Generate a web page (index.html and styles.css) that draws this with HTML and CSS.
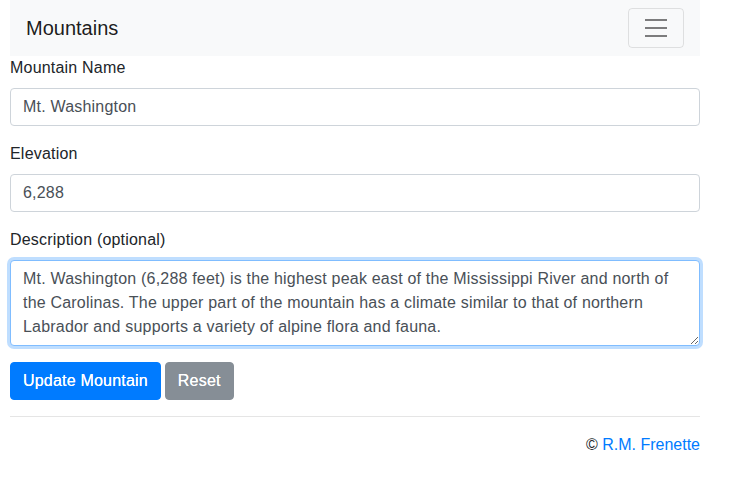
FILE: index.html
```html
<!DOCTYPE html>
<html lang="en">
<head>
<meta charset="utf-8">
<title>Mountains</title>
<link rel="stylesheet" href="styles.css">
</head>
<body>
<div class="page">
  <nav class="navbar">
    <span class="brand">Mountains</span>
    <button class="toggler" type="button" aria-label="Toggle navigation">
      <svg width="30" height="30" viewBox="0 0 30 30" aria-hidden="true"><path d="M4 7h22M4 15h22M4 23h22" stroke="rgba(0,0,0,0.5)" stroke-width="2" stroke-linecap="butt" fill="none"/></svg>
    </button>
  </nav>
  <form class="form">
    <div class="group">
      <label class="label" for="name">Mountain Name</label>
      <input class="control" id="name" type="text" value="Mt. Washington">
    </div>
    <div class="group">
      <label class="label" for="elev">Elevation</label>
      <input class="control" id="elev" type="text" value="6,288">
    </div>
    <div class="group">
      <label class="label" for="desc">Description (optional)</label>
      <textarea class="control area focused" id="desc" rows="3">Mt. Washington (6,288 feet) is the highest peak east of the Mississippi River and north of the Carolinas. The upper part of the mountain has a climate similar to that of northern Labrador and supports a variety of alpine flora and fauna.</textarea>
    </div>
    <div class="actions">
      <button class="btn primary" type="button">Update Mountain</button>
      <button class="btn secondary" type="button">Reset</button>
    </div>
  </form>
  <hr class="rule">
  <footer class="footer">© <a class="link" href="#">R.M. Frenette</a></footer>
</div>
</body>
</html>
```
FILE: styles.css
```css
* { box-sizing: border-box; }
html, body { margin: 0; padding: 0; }
body {
  font-family: "Liberation Sans", Arial, Helvetica, sans-serif;
  font-size: 16px;
  line-height: 1.5;
  letter-spacing: 0.2px;
  color: #212529;
  background: #fff;
}
.page {
  width: 690px;
  margin-left: 10px;
}
.navbar {
  display: flex;
  align-items: center;
  justify-content: space-between;
  padding: 8px 16px;
  background: #f8f9fa;
  height: 56px;
}
.brand {
  font-size: 20px;
  line-height: 30px;
  padding: 5px 0;
  letter-spacing: 0;
  color: rgba(0,0,0,0.9);
}
.toggler {
  width: 56px;
  height: 40px;
  padding: 4px 12px;
  border: 1px solid rgba(0,0,0,0.1);
  border-radius: 4px;
  background: transparent;
  display: flex;
  align-items: center;
  justify-content: center;
}
.toggler svg { display: block; }
.form { display: flex; flex-direction: column; }
.group { display: flex; flex-direction: column; margin-bottom: 16px; }
.label { margin-bottom: 8px; line-height: 24px; }
.control {
  display: block;
  width: 100%;
  height: 38px;
  padding: 6px 12px;
  font-family: inherit;
  font-size: 16px;
  line-height: 24px;
  letter-spacing: 0.2px;
  color: #495057;
  background: #fff;
  border: 1px solid #ced4da;
  border-radius: 4px;
  margin: 0;
}
.area {
  height: 86px;
  resize: vertical;
  overflow: auto;
}
.focused {
  border-color: #80bdff;
  box-shadow: 0 0 0 3px rgba(0,123,255,0.25);
  outline: none;
}
.actions { display: flex; gap: 4px; }
.btn {
  font-family: inherit;
  font-size: 16px;
  line-height: 24px;
  letter-spacing: 0.2px;
  padding: 6px 12px;
  border: 1px solid transparent;
  border-radius: 4px;
  color: #fff;
  text-shadow: 0 0 0.4px #fff;
  cursor: pointer;
}
.primary { background: #007bff; border-color: #007bff; }
.secondary { background: #868e96; border-color: #868e96; }
.rule {
  margin: 16px 0;
  border: 0;
  border-top: 1px solid rgba(0,0,0,0.1);
  height: 0;
}
.footer { text-align: right; line-height: 24px; letter-spacing: 0; }
.link { color: #007bff; text-decoration: none; }
```
